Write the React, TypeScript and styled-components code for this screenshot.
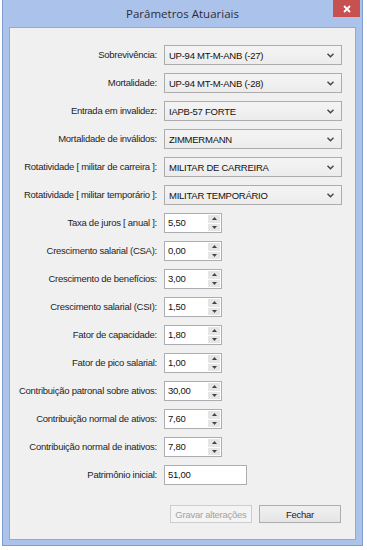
import React from "react";
import styled, { createGlobalStyle } from "styled-components";

const Global = createGlobalStyle`
  html, body { margin: 0; padding: 0; background: #ffffff; }
  body {
    font-family: "Liberation Sans", Arial, sans-serif;
    font-size: 9.5px;
    letter-spacing: -0.25px;
    color: #1b1b1b;
  }
`;

const Window = styled.div`
  box-sizing: border-box;
  width: 361px;
  height: 546px;
  margin-left: 2px;
  border: 1px solid #7f9dcc;
  border-top: none;
  background: #abc3eb;
  padding: 0 6px 5px 6px;
  display: flex;
  flex-direction: column;
`;

const TitleBar = styled.div`
  position: relative;
  height: 27px;
  margin: 0 -6px;
  display: flex;
  align-items: center;
  justify-content: center;
`;

const Title = styled.div`
  font-family: "Open Sans", "Noto Sans", sans-serif;
  font-size: 11.5px;
  letter-spacing: 0;
  color: #2d2d3a;
  margin-top: -1px;
`;

const CloseButton = styled.div`
  position: absolute;
  top: 0;
  right: 2px;
  width: 27px;
  height: 17px;
  background: #c75050;
  display: flex;
  align-items: center;
  justify-content: center;
`;

const Client = styled.div`
  flex: 1;
  background: #f0f0f0;
  border: 1px solid #91a9d4;
  display: flex;
  flex-direction: column;
`;

const Form = styled.div`
  display: grid;
  grid-template-columns: 147px 1fr;
  column-gap: 7px;
  row-gap: 8px;
  padding-top: 17px;
`;

const Label = styled.div`
  height: 20px;
  line-height: 20px;
  text-align: right;
  white-space: nowrap;
  color: #1e1e1e;
`;

const Combo = styled.div`
  box-sizing: border-box;
  width: 178px;
  height: 20px;
  border: 1px solid #acacac;
  background: linear-gradient(#f4f4f4, #ececec);
  display: flex;
  align-items: center;
  justify-content: space-between;
  padding: 0 7px 0 4px;
  color: #111;
  white-space: nowrap;
`;

const Spinner = styled.div<{ $width?: number }>`
  box-sizing: border-box;
  width: ${(p) => p.$width ?? 58}px;
  height: 20px;
  border: 1px solid #abadb3;
  background: #ffffff;
  display: flex;
  align-items: stretch;
`;

const Value = styled.div`
  flex: 1;
  line-height: 18px;
  padding-left: 3px;
  color: #111;
`;

const SpinColumn = styled.div`
  width: 12px;
  margin: 1px 1px 1px 0;
  display: flex;
  flex-direction: column;
  gap: 1px;
`;

const SpinHalf = styled.div`
  flex: 1;
  background: #e6e6e6;
  display: flex;
  align-items: center;
  justify-content: center;
`;

const ButtonRow = styled.div`
  display: flex;
  justify-content: flex-end;
  gap: 7px;
  margin-top: 20px;
  padding-right: 14px;
`;

const Button = styled.div<{ $disabled?: boolean }>`
  box-sizing: border-box;
  width: 82px;
  height: 18px;
  display: flex;
  align-items: center;
  justify-content: center;
  white-space: nowrap;
  border: 1px solid ${(p) => (p.$disabled ? "#cdcdcd" : "#adadad")};
  background: ${(p) => (p.$disabled ? "#f4f4f4" : "linear-gradient(#f0f0f0, #e5e5e5)")};
  color: ${(p) => (p.$disabled ? "#a3a3a3" : "#1b1b1b")};
`;

const Chevron = () => (
  <svg width="7" height="5" viewBox="0 0 7 5">
    <path d="M0.5 0.8 L3.5 3.8 L6.5 0.8" fill="none" stroke="#444" strokeWidth="1.4" />
  </svg>
);

const UpArrow = () => (
  <svg width="5" height="3" viewBox="0 0 5 3">
    <path d="M0 3 L2.5 0 L5 3 Z" fill="#444" />
  </svg>
);

const DownArrow = () => (
  <svg width="5" height="3" viewBox="0 0 5 3">
    <path d="M0 0 L2.5 3 L5 0 Z" fill="#444" />
  </svg>
);

const combos: [string, string][] = [
  ["Sobrevivência:", "UP-94 MT-M-ANB (-27)"],
  ["Mortalidade:", "UP-94 MT-M-ANB (-28)"],
  ["Entrada em invalidez:", "IAPB-57 FORTE"],
  ["Mortalidade de inválidos:", "ZIMMERMANN"],
  ["Rotatividade [ militar de carreira ]:", "MILITAR DE CARREIRA"],
  ["Rotatividade [ militar temporário ]:", "MILITAR TEMPORÁRIO"],
];

const numbers: [string, string][] = [
  ["Taxa de juros [ anual ]:", "5,50"],
  ["Crescimento salarial (CSA):", "0,00"],
  ["Crescimento de benefícios:", "3,00"],
  ["Crescimento salarial (CSI):", "1,50"],
  ["Fator de capacidade:", "1,80"],
  ["Fator de pico salarial:", "1,00"],
  ["Contribuição patronal sobre ativos:", "30,00"],
  ["Contribuição normal de ativos:", "7,60"],
  ["Contribuição normal de inativos:", "7,80"],
];

export default function App() {
  return (
    <>
      <Global />
      <Window>
        <TitleBar>
          <Title>Parâmetros Atuariais</Title>
          <CloseButton>
            <svg width="8" height="8" viewBox="0 0 8 8">
              <path d="M1 1 L7 7 M7 1 L1 7" stroke="#fff" strokeWidth="1.8" />
            </svg>
          </CloseButton>
        </TitleBar>
        <Client>
          <Form>
            {combos.map(([label, value]) => (
              <React.Fragment key={label}>
                <Label>{label}</Label>
                <Combo>
                  <span>{value}</span>
                  <Chevron />
                </Combo>
              </React.Fragment>
            ))}
            {numbers.map(([label, value]) => (
              <React.Fragment key={label}>
                <Label>{label}</Label>
                <Spinner>
                  <Value>{value}</Value>
                  <SpinColumn>
                    <SpinHalf>
                      <UpArrow />
                    </SpinHalf>
                    <SpinHalf>
                      <DownArrow />
                    </SpinHalf>
                  </SpinColumn>
                </Spinner>
              </React.Fragment>
            ))}
            <Label>Patrimônio inicial:</Label>
            <Spinner $width={83}>
              <Value>51,00</Value>
            </Spinner>
          </Form>
          <ButtonRow>
            <Button $disabled>Gravar alterações</Button>
            <Button>Fechar</Button>
          </ButtonRow>
        </Client>
      </Window>
    </>
  );
}
